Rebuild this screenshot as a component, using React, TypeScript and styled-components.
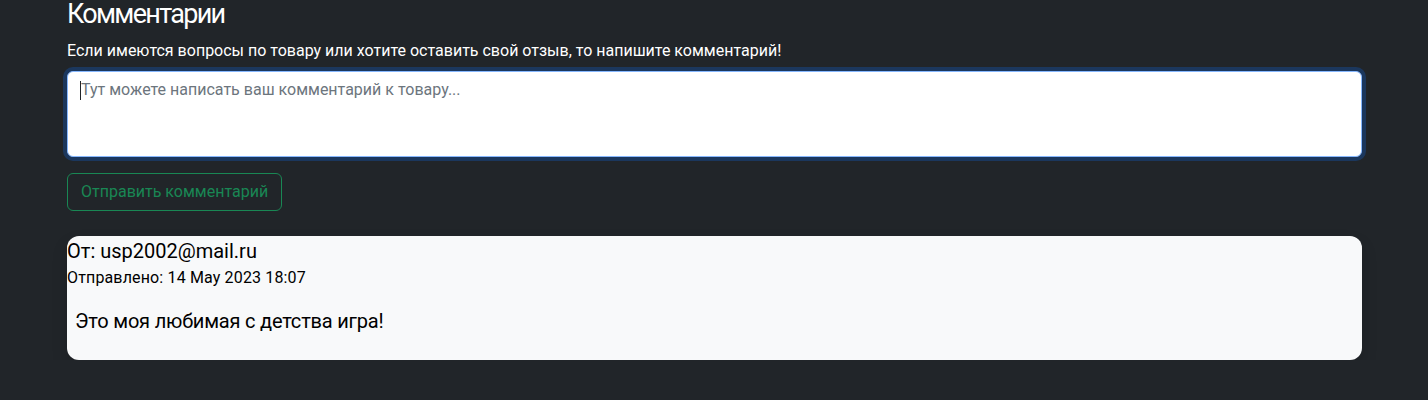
import React from 'react';
import styled, { createGlobalStyle } from 'styled-components';

const GlobalStyle = createGlobalStyle`
  html, body {
    margin: 0;
    padding: 0;
    background: #212529;
    font-family: Roboto, "Noto Sans", sans-serif;
    -webkit-font-smoothing: antialiased;
  }
  * { box-sizing: border-box; }
`;

const Page = styled.div`
  width: 1296px;
  margin: 0 auto;
  padding-left: 1px;
  color: #fff;
`;

const Title = styled.h3`
  margin: -2px 0 8px;
  font-size: 27px;
  font-weight: 400;
  line-height: 33px;
  letter-spacing: -1.7px;
`;

const Hint = styled.p`
  margin: 0 0 8px;
  font-size: 16px;
  line-height: 24px;
`;

const Field = styled.div`
  position: relative;

  /* text caret of the focused field */
  &::after {
    content: '';
    position: absolute;
    left: 13px;
    top: 10px;
    width: 1px;
    height: 19px;
    background: #212529;
  }
`;

const TextArea = styled.textarea`
  display: block;
  width: 100%;
  height: 86px;
  padding: 6px 12px 6px 13px;
  font: inherit;
  font-size: 16px;
  line-height: 24px;
  color: #212529;
  background: #fff;
  border: 1px solid #86b7fe;
  border-radius: 6px;
  box-shadow: 0 0 0 4px rgba(13, 110, 253, 0.25);
  outline: none;
  resize: none;

  &::placeholder {
    color: #6c757d;
  }
`;

const SendButton = styled.button`
  display: inline-block;
  margin-top: 16px;
  padding: 6px 13px;
  font: inherit;
  font-size: 16px;
  line-height: 24px;
  color: #198754;
  background: transparent;
  border: 1px solid #198754;
  border-radius: 6px;
  cursor: pointer;
`;

const CommentCard = styled.div`
  margin-top: 25px;
  padding: 3px 0 24px;
  background: #f8f9fa;
  color: #000;
  border-radius: 12px;
  box-shadow: 0 8px 16px rgba(0, 0, 0, 0.15);
`;

const Author = styled.h5`
  margin: 0 0 3px;
  font-size: 20px;
  font-weight: 400;
  line-height: 24px;
`;

const Sent = styled.div`
  font-size: 16px;
  line-height: 24px;
  letter-spacing: 0.15px;
`;

const Body = styled.p`
  margin: 16px 0 0;
  padding-left: 8px;
  font-size: 20px;
  line-height: 30px;
  letter-spacing: -0.2px;
`;

export default function App() {
  return (
    <>
      <GlobalStyle />
      <Page>
        <Title>Комментарии</Title>
        <Hint>Если имеются вопросы по товару или хотите оставить свой отзыв, то напишите комментарий!</Hint>
        <Field>
          <TextArea placeholder="Тут можете написать ваш комментарий к товару..." />
        </Field>
        <SendButton>Отправить комментарий</SendButton>
        <CommentCard>
          <Author>От: usp2002@mail.ru</Author>
          <Sent>Отправлено: 14 May 2023 18:07</Sent>
          <Body>Это моя любимая с детства игра!</Body>
        </CommentCard>
      </Page>
    </>
  );
}
